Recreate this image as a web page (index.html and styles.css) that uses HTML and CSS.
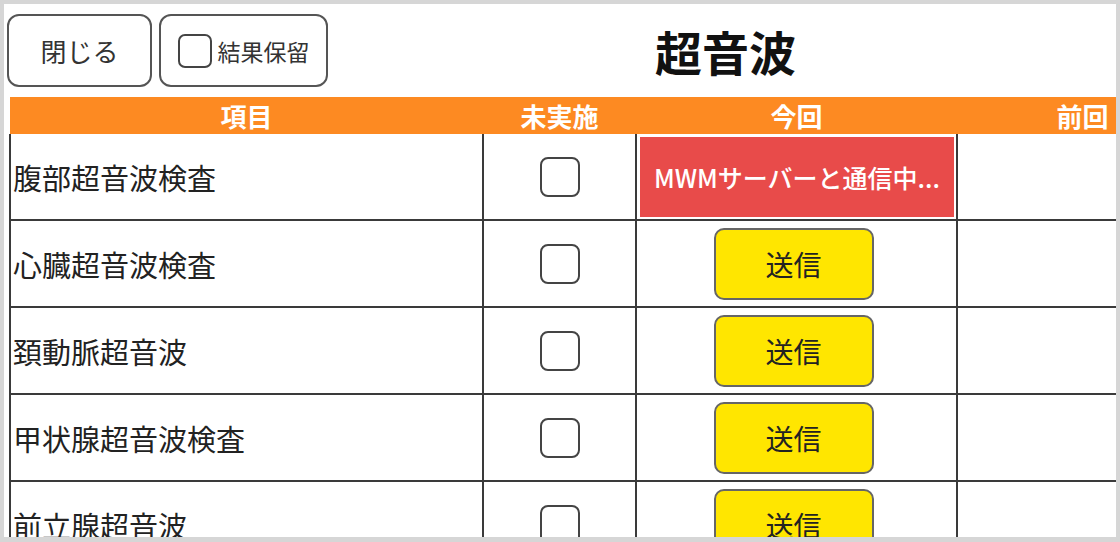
FILE: index.html
```html
<!DOCTYPE html>
<html lang="ja">
<head>
    <meta charset="UTF-8">
    <meta name="viewport" content="width=device-width, initial-scale=1.0">
    <title>超音波</title>
    <link rel="stylesheet" href="styles.css">
</head>
<body>
    <div class="screen">
        <div class="top-bar">
            <button class="btn close-btn">閉じる</button>
            <label class="btn hold-btn">
                <span class="check small"></span>
                結果保留
            </label>
            <h1 class="title">超音波</h1>
        </div>

        <table class="exam-table">
            <colgroup>
                <col class="col-item">
                <col class="col-skip">
                <col class="col-now">
                <col class="col-prev">
            </colgroup>
            <thead>
                <tr>
                    <th>項目</th>
                    <th>未実施</th>
                    <th>今回</th>
                    <th>前回</th>
                </tr>
            </thead>
            <tbody>
                <tr>
                    <td class="item">腹部超音波検査</td>
                    <td class="center"><span class="check"></span></td>
                    <td class="busy-cell"><div class="busy">MWMサーバーと通信中...</div></td>
                    <td></td>
                </tr>
                <tr>
                    <td class="item">心臓超音波検査</td>
                    <td class="center"><span class="check"></span></td>
                    <td class="center"><button class="send-btn">送信</button></td>
                    <td></td>
                </tr>
                <tr>
                    <td class="item">頚動脈超音波</td>
                    <td class="center"><span class="check"></span></td>
                    <td class="center"><button class="send-btn">送信</button></td>
                    <td></td>
                </tr>
                <tr>
                    <td class="item">甲状腺超音波検査</td>
                    <td class="center"><span class="check"></span></td>
                    <td class="center"><button class="send-btn">送信</button></td>
                    <td></td>
                </tr>
                <tr>
                    <td class="item">前立腺超音波</td>
                    <td class="center"><span class="check"></span></td>
                    <td class="center"><button class="send-btn">送信</button></td>
                    <td></td>
                </tr>
            </tbody>
        </table>
    </div>
</body>
</html>
```

FILE: styles.css
```css
body {
    margin: 0;
    font-family: "Noto Sans CJK JP", "Noto Sans", sans-serif;
    color: #222;
    background-color: #d6d6d6;
}
.screen {
    width: 1120px;
    height: 542px;
    box-sizing: border-box;
    border: 4px solid #d6d6d6;
    border-bottom-width: 5px;
    background-color: #fff;
    overflow: hidden;
}
.top-bar {
    display: flex;
    align-items: center;
    gap: 7px;
    padding: 10px 0 0 3px;
    height: 73px;
}
.btn {
    box-sizing: border-box;
    height: 73px;
    display: flex;
    align-items: center;
    justify-content: center;
    border: 2px solid #555;
    border-radius: 12px;
    background-color: #fff;
    color: #333;
    font-family: inherit;
}
.close-btn {
    width: 145px;
    font-size: 26px;
}
.hold-btn {
    width: 169px;
    gap: 6px;
    font-size: 23px;
}
.title {
    flex: 1;
    margin: 0;
    text-align: center;
    font-size: 47px;
    font-weight: bold;
    color: #111;
}
.check {
    display: inline-block;
    box-sizing: border-box;
    width: 40px;
    height: 40px;
    border: 2px solid #444;
    border-radius: 8px;
    background-color: #fff;
    vertical-align: middle;
}
.check.small {
    width: 34px;
    height: 34px;
    border-radius: 7px;
}
.exam-table {
    margin: 10px 0 0 5px;
    width: 1200px;
    table-layout: fixed;
    border-collapse: collapse;
}
.col-item {
    width: 473px;
}
.col-skip {
    width: 153px;
}
.col-now {
    width: 321px;
}
.exam-table th {
    height: 37px;
    padding: 0;
    background-color: #fd8a22;
    color: #fff;
    font-size: 26px;
    font-weight: bold;
    line-height: 1;
}
.exam-table td {
    height: 85px;
    padding: 0;
    border: 2px solid #3a3a3a;
}
.exam-table tbody tr:first-child td {
    height: 82px;
    border-top: none;
}
.item {
    padding-left: 2px !important;
    font-size: 29px;
    color: #222;
}
.center {
    text-align: center;
}
.busy-cell {
    padding: 2px 2px 1px 3px !important;
}
.busy {
    height: 80px;
    display: flex;
    align-items: center;
    justify-content: center;
    background-color: #e84b4a;
    color: #fff;
    font-size: 25px;
    font-weight: 500;
}
.send-btn {
    width: 160px;
    height: 72px;
    margin-right: 6px;
    border: 2px solid #666;
    border-radius: 10px;
    background-color: #ffe600;
    color: #222;
    font-family: inherit;
    font-size: 28px;
}
```
